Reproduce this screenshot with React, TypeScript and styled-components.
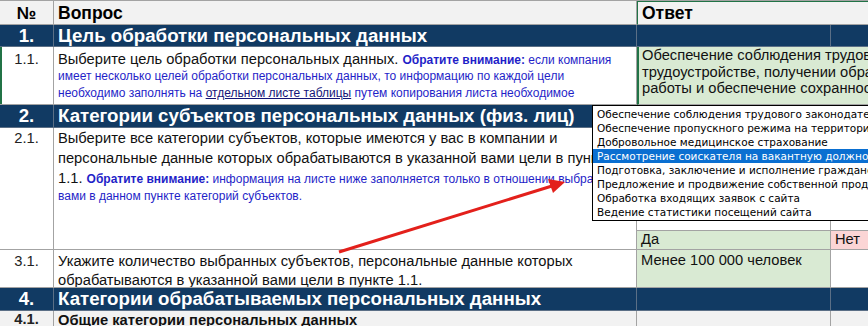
import React from 'react';
import styled, { createGlobalStyle } from 'styled-components';

const GlobalStyle = createGlobalStyle`
  html, body {
    margin: 0;
    padding: 0;
    background: #ffffff;
    overflow: hidden;
  }
  * {
    box-sizing: border-box;
  }
`;

const GRID = '#a3a3a3';
const NAVY = '#113a63';
const GREEN = '#d9ead3';
const PINK = '#fbd5d5';
const SELECT = '#217346';

const Sheet = styled.div`
  position: relative;
  width: 1120px;
  height: 326px;
  overflow: hidden;
  font-family: 'Liberation Sans', Arial, sans-serif;
  color: #111;
  border-top: 1px solid ${GRID};
`;

const Row = styled.div<{ $h: number; $sub?: string }>`
  display: grid;
  grid-template-columns: 54px 583px 194px 289px;
  grid-template-rows: ${(p) => p.$sub || `${p.$h}px`};
  height: ${(p) => p.$h}px;
`;

const Cell = styled.div<{ $bg?: string; $span?: number; $rows?: number; $pt?: number }>`
  grid-column: span ${(p) => p.$span || 1};
  grid-row: span ${(p) => p.$rows || 1};
  background: ${(p) => p.$bg || '#fff'};
  border-right: 1px solid ${GRID};
  border-bottom: 1px solid ${GRID};
  padding: ${(p) => p.$pt ?? 0}px 4px 0 4px;
  overflow: hidden;
  white-space: nowrap;
  position: relative;
`;

const HeadCell = styled(Cell)<{ $center?: boolean; $selected?: boolean }>`
  background: #f2f2f2;
  font-size: 17.5px;
  font-weight: 700;
  line-height: 24px;
  color: #000;
  text-align: ${(p) => (p.$center ? 'center' : 'left')};
  ${(p) =>
    p.$selected &&
    `border-left: 1px solid ${SELECT}; box-shadow: inset 0 1px 0 ${SELECT};`}
`;

const SectionCell = styled(Cell)<{ $center?: boolean }>`
  background: ${NAVY};
  color: #fff;
  font-size: 18.7px;
  font-weight: 700;
  line-height: 22px;
  text-align: ${(p) => (p.$center ? 'center' : 'left')};
  border-color: #5b6f86;
`;

const NumCell = styled(Cell)<{ $bold?: boolean; $edge?: boolean }>`
  text-align: center;
  font-size: 14.7px;
  color: #222;
  font-weight: ${(p) => (p.$bold ? 700 : 400)};
  ${(p) => p.$edge && `box-shadow: inset 2px 0 0 ${SELECT};`}
`;

const Text = styled.div`
  font-size: 12px;
  line-height: 16.5px;
`;

const Line = styled.div<{ $lh?: number }>`
  line-height: ${(p) => p.$lh || 16.5}px;
  height: ${(p) => p.$lh || 16.5}px;
`;

const Big = styled.span<{ $bold?: boolean }>`
  font-size: 14.7px;
  color: #111;
  font-weight: ${(p) => (p.$bold ? 700 : 400)};
`;

const Note = styled.span`
  font-size: 12px;
  color: #1f1fc8;
`;

const Attention = styled(Note)`
  font-weight: 700;
`;

const Link = styled.span`
  font-size: 12px;
  color: #141478;
  text-decoration: underline;
`;

const AnswerCell = styled(Cell)<{ $edge?: boolean }>`
  font-size: 14.7px;
  line-height: 16.5px;
  ${(p) => p.$edge && `border-left: 2px solid ${SELECT}; padding-left: 3px;`}
`;

const Dropdown = styled.ul`
  position: absolute;
  left: 592px;
  top: 104px;
  width: 320px;
  margin: 0;
  padding: 1px 0;
  list-style: none;
  background: #fff;
  border: 1px solid #000;
  font-family: 'DejaVu Sans', Tahoma, sans-serif;
  font-size: 10.5px;
`;

const Option = styled.li<{ $active?: boolean }>`
  height: 14px;
  line-height: 14px;
  padding-left: 4px;
  white-space: nowrap;
  color: ${(p) => (p.$active ? '#fff' : '#000')};
  background: ${(p) => (p.$active ? '#0a6fd1' : 'transparent')};
`;

const Arrow = styled.svg`
  position: absolute;
  left: 0;
  top: 0;
  pointer-events: none;
`;

const options = [
  'Обеспечение соблюдения трудового законодательства',
  'Обеспечение пропускного режима на территории',
  'Добровольное медицинское страхование',
  'Рассмотрение соискателя на вакантную должность',
  'Подготовка, заключение и исполнение гражданско-правового договора',
  'Предложение и продвижение собственной продукции',
  'Обработка входящих заявок с сайта',
  'Ведение статистики посещений сайта',
];

const App = () => {
  return (
    <>
      <GlobalStyle />
      <Sheet>
        <Row $h={24}>
          <HeadCell $center>№</HeadCell>
          <HeadCell>Вопрос</HeadCell>
          <HeadCell $span={2} $selected>
            Ответ
          </HeadCell>
        </Row>

        <Row $h={22}>
          <SectionCell $center>1.</SectionCell>
          <SectionCell>Цель обработки персональных данных</SectionCell>
          <SectionCell />
          <SectionCell />
        </Row>

        <Row $h={58}>
          <NumCell $pt={3} $edge>
            <Line $lh={18}>1.1.</Line>
          </NumCell>
          <Cell $pt={3}>
            <Text>
              <Line $lh={18}>
                <Big>Выберите цель обработки персональных данных. </Big>
                <Attention>Обратите внимание: </Attention>
                <Note>если компания</Note>
              </Line>
              <Line>
                <Note>имеет несколько целей обработки персональных данных, то информацию по каждой цели</Note>
              </Line>
              <Line>
                <Note>необходимо заполнять на </Note>
                <Link>отдельном листе таблицы</Link>
                <Note> путем копирования листа необходимое</Note>
              </Line>
            </Text>
          </Cell>
          <AnswerCell $bg={GREEN} $span={2} $edge>
            Обеспечение соблюдения трудового законодательства при
            <br />
            трудоустройстве, получении образования и продвижении по службе,
            <br />
            работы и обеспечение сохранности имущества
          </AnswerCell>
        </Row>

        <Row $h={23}>
          <SectionCell $center>2.</SectionCell>
          <SectionCell>Категории субъектов персональных данных (физ. лиц)</SectionCell>
          <SectionCell />
          <SectionCell />
        </Row>

        <Row $h={122} $sub="103px 19px">
          <NumCell $rows={2}>
            <Line $lh={20}>2.1.</Line>
          </NumCell>
          <Cell $rows={2}>
            <Text>
              <Line $lh={20}>
                <Big>Выберите все категории субъектов, которые имеются у вас в компании и</Big>
              </Line>
              <Line $lh={20}>
                <Big>персональные данные которых обрабатываются в указанной вами цели в пункте</Big>
              </Line>
              <Line $lh={20}>
                <Big>1.1. </Big>
                <Attention>Обратите внимание: </Attention>
                <Note>информация на листе ниже заполняется только в отношении выбранных</Note>
              </Line>
              <Line $lh={17}>
                <Note>вами в данном пункте категорий субъектов.</Note>
              </Line>
            </Text>
          </Cell>
          <Cell />
          <Cell />
          <AnswerCell $bg={GREEN}>Да</AnswerCell>
          <AnswerCell $bg={PINK}>Нет</AnswerCell>
        </Row>

        <Row $h={38}>
          <NumCell $pt={2}>
            <Line $lh={19}>3.1.</Line>
          </NumCell>
          <Cell $pt={2}>
            <Text>
              <Line $lh={19}>
                <Big>Укажите количество выбранных субъектов, персональные данные которых</Big>
              </Line>
              <Line $lh={19}>
                <Big>обрабатываются в указанной вами цели в пункте 1.1.</Big>
              </Line>
            </Text>
          </Cell>
          <AnswerCell $bg={GREEN} $pt={2}>
            Менее 100 000 человек
          </AnswerCell>
          <Cell />
        </Row>

        <Row $h={23}>
          <SectionCell $center>4.</SectionCell>
          <SectionCell>Категории обрабатываемых персональных данных</SectionCell>
          <SectionCell />
          <SectionCell />
        </Row>

        <Row $h={30}>
          <NumCell $bold $bg="#f2f2f2">
            <Line $lh={17}>4.1.</Line>
          </NumCell>
          <Cell $bg="#f2f2f2">
            <Line $lh={17}>
              <Big $bold>Общие категории персональных данных</Big>
            </Line>
          </Cell>
          <Cell $bg="#f2f2f2" />
          <Cell $bg="#f2f2f2" />
        </Row>

        <Dropdown>
          {options.map((o, i) => (
            <Option key={o} $active={i === 3}>
              {o}
            </Option>
          ))}
        </Dropdown>

        <Arrow width="868" height="326" viewBox="0 0 868 326">
          <line x1="339" y1="251" x2="552" y2="185" stroke="#e3201b" strokeWidth="3" />
          <polygon points="565,181 548,178 553,192" fill="#e3201b" />
        </Arrow>
      </Sheet>
    </>
  );
};

export default App;
